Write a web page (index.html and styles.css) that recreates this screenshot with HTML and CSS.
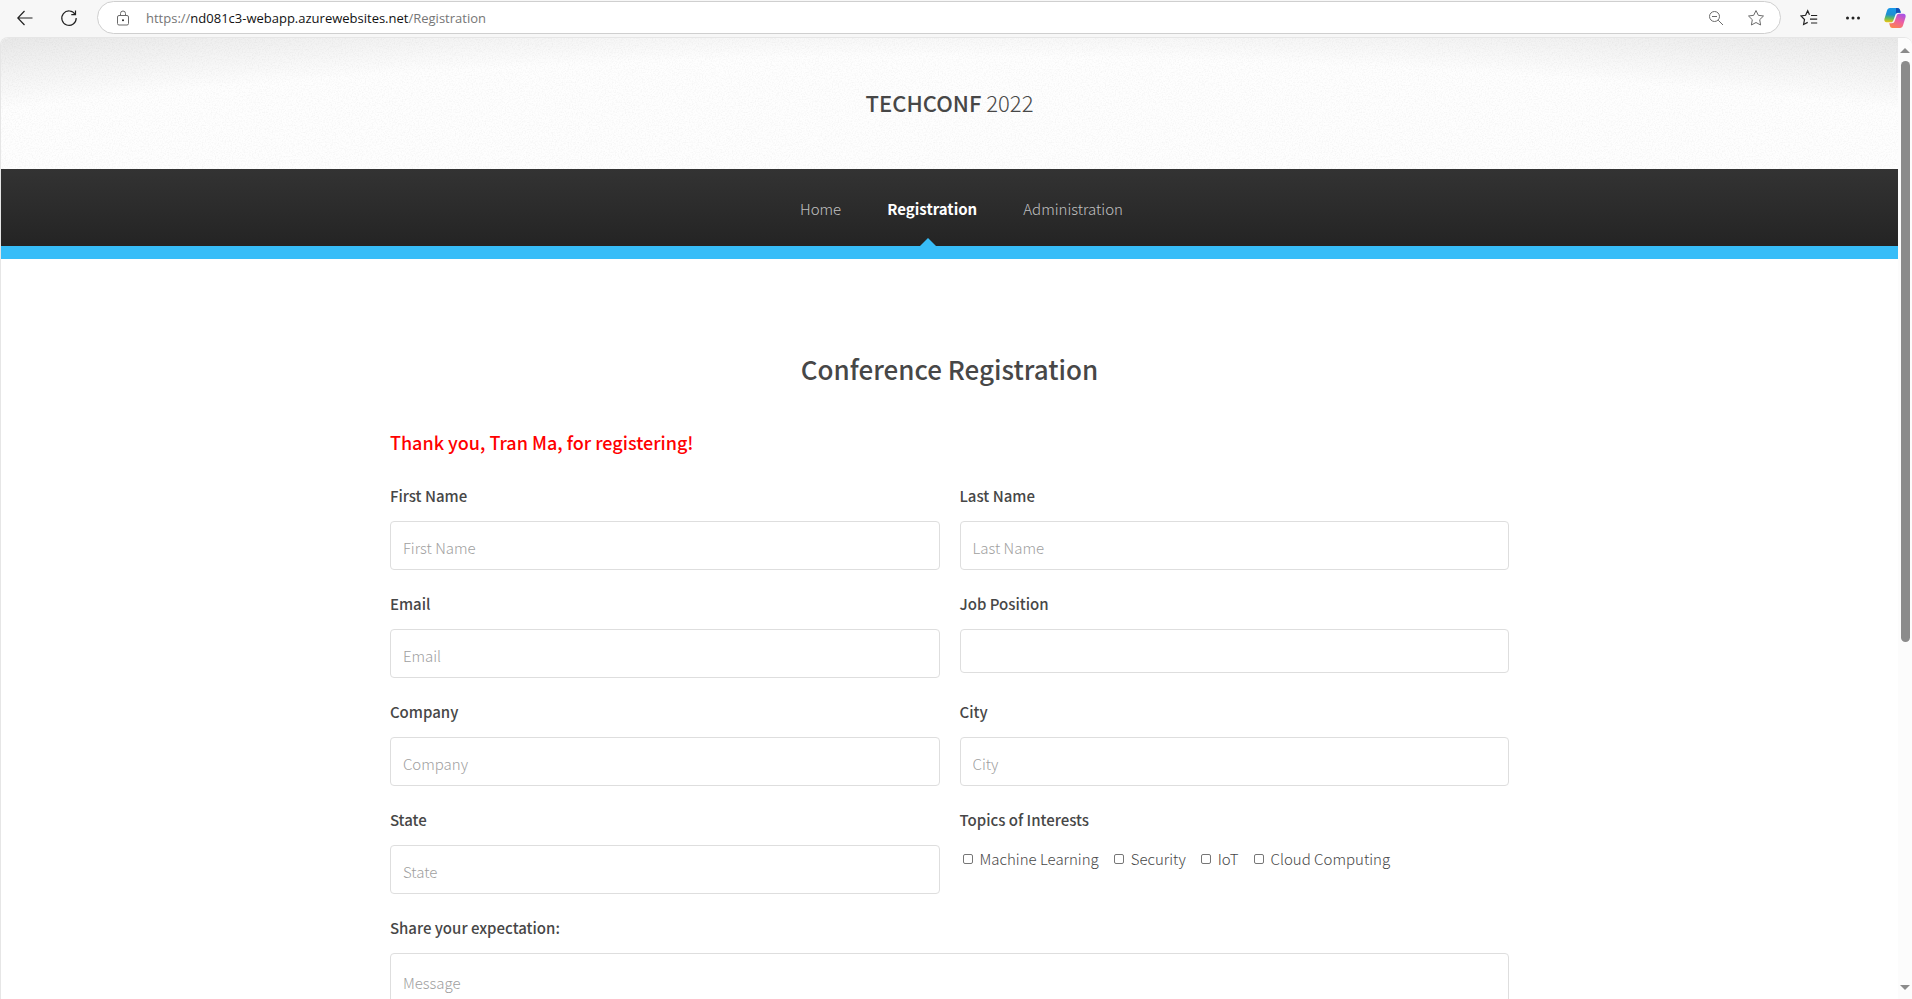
FILE: index.html
```html
<!DOCTYPE html>
<html lang="en">
<head>
<meta charset="utf-8">
<title>TechConf 2022 - Registration</title>
<link rel="stylesheet" href="styles.css">
</head>
<body>
<div class="browser">
  <div class="toolbar">
    <button class="tool back" aria-label="Back"><svg width="16" height="16" viewBox="0 0 16 16"><path d="M15.500 8H1M7.500 1L.8 8l6.700 7"/></svg></button>
    <button class="tool reload" aria-label="Reload"><svg width="18" height="18" viewBox="0 0 18 18"><path d="M15.200 5.500A7.200 7.200 0 1 0 16.200 9M15.500 1.500v4.200h-4.200"/></svg></button>
    <div class="address">
      <svg class="lock" width="14" height="16" viewBox="0 0 14 16"><rect x="1.500" y="5.500" width="11" height="9.500" rx="1.500"/><path d="M4.500 5.500V3.500a2.500 2.500 0 0 1 5 0v2"/><circle class="dot" cx="7" cy="10.300" r="1"/></svg>
      <p class="url">https://<span class="host">nd081c3-webapp.azurewebsites.net</span>/Registration</p>
      <button class="tool dim" aria-label="Zoom out"><svg width="16" height="16" viewBox="0 0 16 16"><circle cx="6.500" cy="6.500" r="5"/><path d="M10.200 10.200l4.800 4.800M4 6.500h5"/></svg></button>
      <button class="tool dim" aria-label="Add to favorites"><svg width="18" height="18" viewBox="0 0 18 18"><path d="M9 1.500l2.300 4.800 5.200.7-3.800 3.700.9 5.300L9 13.500 4.400 16l.9-5.300L1.500 7l5.200-.7z"/></svg></button>
    </div>
    <button class="tool favs" aria-label="Favorites"><svg width="18" height="18" viewBox="0 0 18 18"><path d="M9.500 5.700L7.700 1.800 5.600 6.300l-4.600.7 3.500 3.500-.9 5 4.100-2.100M11 6.500h6.200M10 10.200h7.200M11 14h6.200"/></svg></button>
    <button class="tool more" aria-label="Settings and more"><svg width="16" height="16" viewBox="0 0 16 16"><g class="dot"><circle cx="2.500" cy="8" r="1.500"/><circle cx="8" cy="8" r="1.500"/><circle cx="13.500" cy="8" r="1.500"/></g></svg></button>
    <button class="tool copilot" aria-label="Copilot"><svg width="22" height="22" viewBox="0 0 22 22">
      <defs>
        <linearGradient id="cool" x1=".3" y1="0" x2=".2" y2="1"><stop offset="0" stop-color="#1798e8"/><stop offset=".45" stop-color="#1e8fd0"/><stop offset=".7" stop-color="#5dba62"/><stop offset="1" stop-color="#f2c50c"/></linearGradient>
        <linearGradient id="warm" x1=".8" y1="0" x2=".3" y2="1"><stop offset="0" stop-color="#a451e8"/><stop offset=".5" stop-color="#ee5fa0"/><stop offset="1" stop-color="#fb8350"/></linearGradient>
      </defs>
      <path fill="url(#cool)" d="M6 1h7.500c1.600 0 2.200 1 2.600 2.300l.7 2.400h-2.600c-1.600 0-2.400.8-2.900 2.200L9.500 13c-.5 1.500-1.200 2.300-2.800 2.300H2.600C.8 15.300 0 13.800.4 12L3 3.500C3.500 2 4.400 1 6 1z"/>
      <path fill="#1452b8" d="M12 1h1.500c1.600 0 2.200 1 2.600 2.300l.7 2.400h-2.600c-1 0-1.600.3-2.200 1z"/>
      <path fill="url(#warm)" d="M16 21H8.500c-1.600 0-2.200-1-2.600-2.300l-.7-2.400h2.600c1.600 0 2.400-.8 2.900-2.200L12.500 9c.5-1.500 1.200-2.300 2.800-2.300h4.100c1.800 0 2.600 1.500 2.200 3.300L19 18.500c-.5 1.500-1.400 2.500-3 2.500z"/>
    </svg></button>
  </div>
  <div class="viewport">
    <div class="page">
      <header class="site-header">
        <svg class="grain" aria-hidden="true"><filter id="noise"><feTurbulence type="fractalNoise" baseFrequency="0.7" numOctaves="2"/><feColorMatrix values="0 0 0 0 0  0 0 0 0 0  0 0 0 0 0  2 0 0 0 -0.8"/></filter><rect width="100%" height="100%" filter="url(#noise)"/></svg>
        <h1 class="logo">TECHCONF <span class="year">2022</span></h1>
      </header>
      <nav class="site-nav">
        <a class="nav-link" href="#home">Home</a>
        <a class="nav-link current" href="#registration">Registration</a>
        <a class="nav-link" href="#administration">Administration</a>
      </nav>
      <main class="content">
        <h2 class="title">Conference Registration</h2>
        <p class="notice">Thank you, Tran Ma, for registering!</p>
        <form class="form">
          <div class="field"><label for="first">First Name</label><input class="box" id="first" type="text" placeholder="First Name"></div>
          <div class="field"><label for="last">Last Name</label><input class="box" id="last" type="text" placeholder="Last Name"></div>
          <div class="field"><label for="email">Email</label><input class="box" id="email" type="email" placeholder="Email"></div>
          <div class="field"><label for="job">Job Position</label><select class="box short" id="job"><option></option></select></div>
          <div class="field"><label for="company">Company</label><input class="box" id="company" type="text" placeholder="Company"></div>
          <div class="field"><label for="city">City</label><input class="box" id="city" type="text" placeholder="City"></div>
          <div class="field"><label for="state">State</label><input class="box" id="state" type="text" placeholder="State"></div>
          <fieldset class="field topics">
            <legend>Topics of Interests</legend>
            <div class="checks">
              <label class="check"><input type="checkbox">Machine Learning</label>
              <label class="check"><input type="checkbox">Security</label>
              <label class="check"><input type="checkbox">IoT</label>
              <label class="check"><input type="checkbox">Cloud Computing</label>
            </div>
          </fieldset>
          <div class="field wide"><label for="message">Share your expectation:</label><textarea class="box message" id="message" placeholder="Message"></textarea></div>
        </form>
      </main>
    </div>
    <div class="scrollbar" aria-hidden="true">
      <span class="arrow up"></span>
      <div class="track"><div class="thumb"></div></div>
      <span class="arrow down"></span>
    </div>
  </div>
</div>
</body>
</html>
```
FILE: styles.css
```css
* { box-sizing: border-box; }
body { margin: 0; background: #f7f7f7; font-family: "Noto Sans CJK JP", "Noto Sans", sans-serif; color: #474747; }
h1, h2, p { margin: 0; }
button { font: inherit; border: 0; background: none; padding: 0; }

.browser { display: flex; flex-direction: column; height: 100vh; overflow: hidden; }

/* toolbar */
.toolbar { display: flex; align-items: center; height: 37px; flex: none; padding: 0 6px 2px 17px; }
.tool { display: flex; align-items: center; justify-content: center; flex: none; }
.toolbar svg { fill: none; stroke: #222; stroke-width: 1.2; display: block; }
.toolbar .dim svg, .toolbar .lock { stroke: #6b6b6b; stroke-width: 1; }
.toolbar .dot { fill: #222; stroke: none; }
.toolbar .copilot svg { stroke: none; }
.reload { margin-left: 27px; }
.address { flex: 1; display: flex; align-items: center; height: 33px; margin-left: 19px; padding: 0 15px 0 18px; border: 1px solid #cfcfcf; border-radius: 17px; background: #fff; gap: 23px; }
.lock { flex: none; }
.url { flex: 1; margin-left: -7px; font: 13px/20px "Open Sans", sans-serif; color: #767676; white-space: nowrap; }
.host { color: #111; }
.favs { margin-left: 19px; }
.more { margin-left: 27px; }
.copilot { margin-left: 23px; }

/* viewport */
.viewport { flex: 1; min-height: 0; display: flex; border: solid #e6e6e6; border-width: 1px 0 0 1px; border-radius: 8px 8px 0 0; overflow: hidden; background: #fff; }
.page { flex: 1; min-width: 0; overflow: hidden; }

.site-header { position: relative; height: 131px; display: flex; justify-content: center; align-items: center; padding-bottom: 3px; background: radial-gradient(ellipse 110% 481px at 50% 500px, #fefefe 100%, #e9e9e9 113%); }
.grain { position: absolute; inset: 0; width: 100%; height: 100%; opacity: .04; }
.logo { position: relative; font-size: 22px; line-height: 36px; font-weight: 500; }
.year { font-weight: 300; }

.site-nav { display: flex; justify-content: center; gap: 46px; padding-left: 24px; background: linear-gradient(#333, #242424); border-bottom: 13px solid #37bdf8; }
.nav-link { position: relative; padding-top: 2px; font-size: 15px; line-height: 75px; font-weight: 300; color: #c0c0c0; text-decoration: none; }
.nav-link.current { color: #fff; font-weight: 700; }
.nav-link.current::after { content: ""; position: absolute; left: 50%; bottom: 0; margin-left: -12px; border: solid transparent; border-width: 0 8px 8px; border-bottom-color: #37bdf8; }

/* form */
.content { width: 59%; min-width: 600px; margin: 0 auto; padding-top: 88px; }
.title { font-size: 26px; line-height: 44px; font-weight: 500; text-align: center; }
.notice { margin-top: 35px; font-size: 18px; line-height: 32px; font-weight: 500; color: #f00; }
.form { display: grid; grid-template-columns: 1fr 1fr; column-gap: 20px; row-gap: 20px; margin-top: 26px; align-items: start; }
.field { display: flex; flex-direction: column; height: 88px; min-width: 0; }
.field > label, legend { display: block; padding: 0; margin-bottom: 13px; font-size: 15px; line-height: 24px; font-weight: 500; }
.box { width: 100%; height: 49px; padding: 4px 12px 0; border: 1px solid #dedede; border-radius: 4px; background: #fff; font: 300 15px/24px "Noto Sans CJK JP", "Noto Sans", sans-serif; color: #474747; outline: 0; appearance: none; }
.box::placeholder { color: #a0a0a0; opacity: 1; }
.short { height: 44px; }
.wide { grid-column: 1 / -1; height: auto; }
.message { height: 160px; padding-top: 17px; resize: none; }
.topics { display: block; margin: 0; padding: 0; border: 0; }
.checks { display: flex; flex-wrap: wrap; gap: 15px; padding: 2px 0 0 3px; }
.check { display: flex; align-items: center; gap: 7px; font-size: 15px; line-height: 24px; font-weight: 300; }
.check input { appearance: none; width: 10px; height: 10px; margin: 0; border: 1px solid #767676; border-radius: 2px; background: #fff; }

/* scrollbar */
.scrollbar { width: 14px; flex: none; display: flex; flex-direction: column; align-items: center; padding: 10px 0 9px; gap: 8px; background: #fcfcfc; }
.arrow { border: 5px solid transparent; border-top: 0; border-bottom-color: #8b8b8b; }
.arrow.down { border: 5px solid transparent; border-bottom: 0; border-top-color: #8b8b8b; }
.track { flex: 1; align-self: stretch; padding: 0 2px 0 3px; }
.thumb { height: calc(63% + 4px); border-radius: 5px; background: #8b8b8b; }
```
